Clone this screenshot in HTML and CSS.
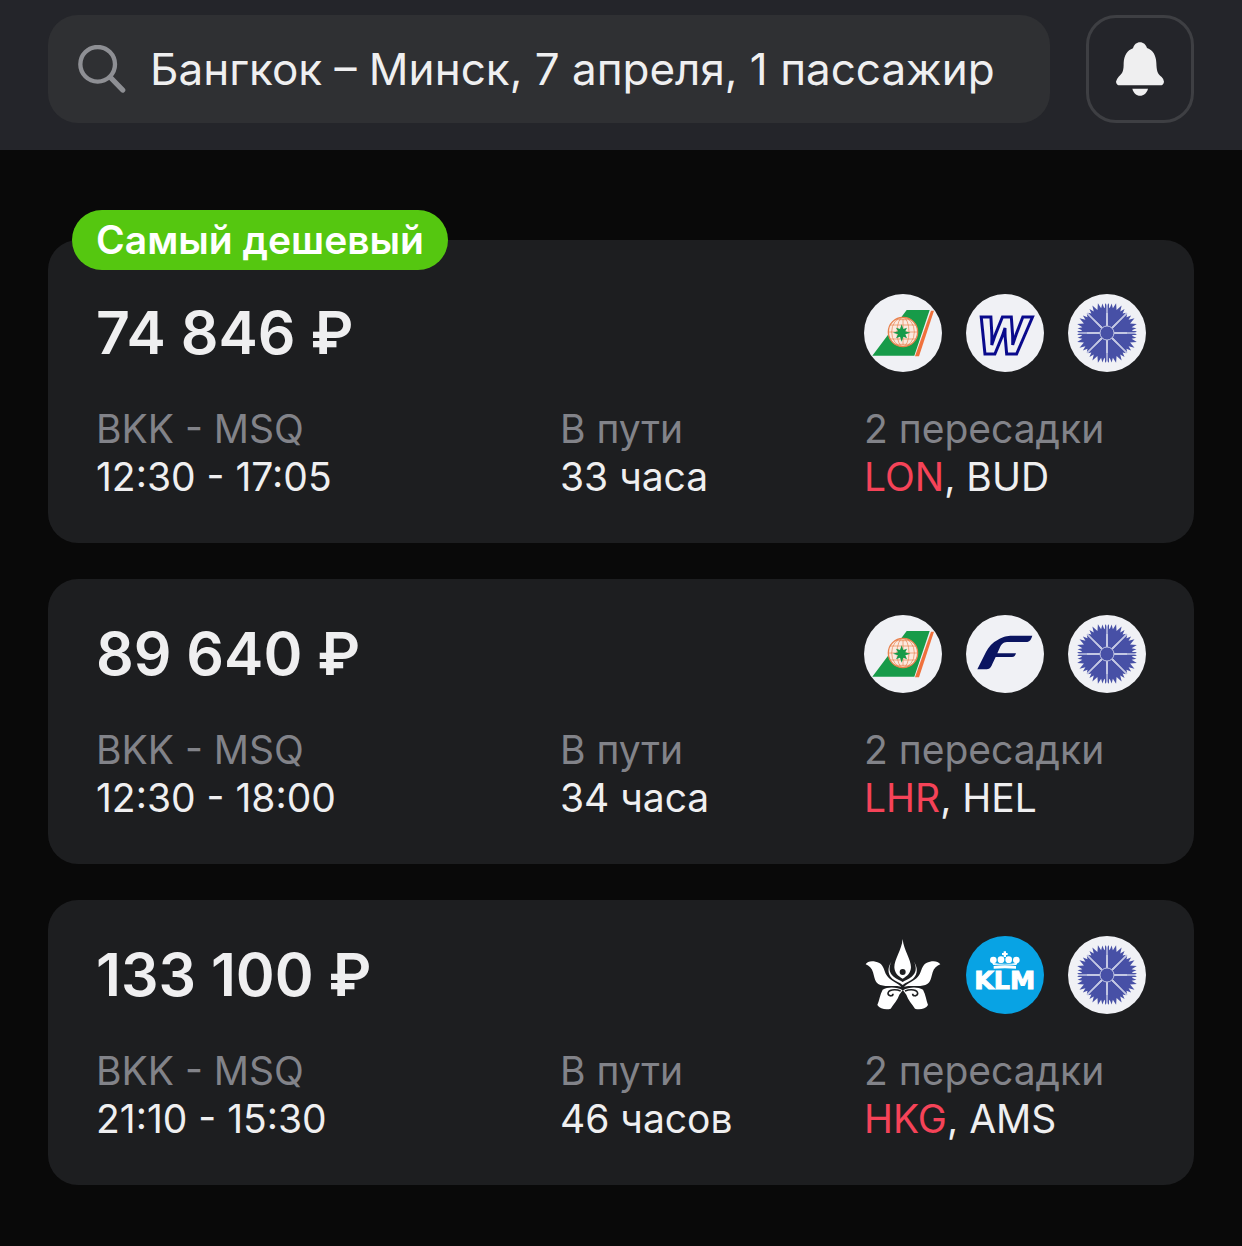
FILE: index.html
```html
<!DOCTYPE html>
<html lang="ru">
<head>
  <meta charset="UTF-8">
  <title>Бангкок – Минск</title>
  <meta name="viewport" content="width=device-width, initial-scale=1">
  <link rel="stylesheet" href="styles.css">
</head>
<body>
  <!-- airline logos used by more than one ticket -->
  <svg class="sprite" aria-hidden="true">
    <symbol id="logo-eva" viewBox="27 27 234 234">
      <circle cx="144" cy="144" r="117" fill="#f0f1f5"/>
      <path d="M52 212 155 75H224L178 212Z" fill="#179b49"/>
      <path d="M228 77H237L192 214H180Z" fill="#f0713c"/>
      <circle cx="144" cy="141" r="44" fill="#fbe9df" stroke="#e8824f" stroke-width="4"/>
      <g fill="none" stroke="#e8824f" stroke-width="2">
        <ellipse cx="144" cy="141" rx="18" ry="44"/>
        <ellipse cx="144" cy="141" rx="34" ry="44"/>
        <path d="M144 97V185M100 141H188M106 120H182M106 162H182M120 104H168M120 178H168"/>
      </g>
      <path d="M140 118 145 132 156 128 151 139 166 143 151 148 156 160 145 155 140 170 135 155 123 160 129 148 114 143 129 139 123 128 135 132Z" fill="#179b49"/>
    </symbol>
    <symbol id="logo-belavia" viewBox="-39 -39 78 78">
      <defs>
        <path id="petal" d="M-2 -7 -8 -21 -10 -26 -7 -24 -7 -29 -4 -25 -3 -31 0 -25 3 -31 4 -25 7 -29 7 -24 10 -26 8 -21 2 -7Z"/>
      </defs>
      <circle r="39" fill="#f0f1f5"/>
      <g fill="#4750a6">
        <use href="#petal" transform="rotate(22.5)"/>
        <use href="#petal" transform="rotate(67.5)"/>
        <use href="#petal" transform="rotate(112.5)"/>
        <use href="#petal" transform="rotate(157.5)"/>
        <use href="#petal" transform="rotate(202.5)"/>
        <use href="#petal" transform="rotate(247.5)"/>
        <use href="#petal" transform="rotate(292.5)"/>
        <use href="#petal" transform="rotate(337.5)"/>
        <path d="M-2-20-2-30 0-27 2-30 2-20ZM-2 20-2 30 0 27 2 30 2 20ZM-20-2-30-2-27 0-30 2-20 2ZM20-2 30-2 27 0 30 2 20 2Z"/>
      </g>
      <path d="M0-29V29M-29 0H29M-20-20 20 20M-20 20 20-20" stroke="#c3c7e4" stroke-width="1.4"/>
      <circle r="7" fill="#4750a6" stroke="#b4b9de" stroke-width="1"/>
    </symbol>
  </svg>

  <header class="topbar">
    <label class="search">
      <svg class="search-icon" viewBox="234 134 144 144" aria-hidden="true">
        <circle cx="293" cy="192" r="52"/>
        <path d="M333 233 368 269"/>
      </svg>
      <input type="text" aria-label="Поиск" value="Бангкок – Минск, 7 апреля, 1 пассажир">
    </label>
    <button class="bell" type="button" aria-label="Уведомления">
      <svg viewBox="228 128 144 160" aria-hidden="true">
        <path d="M300 128C310 128 318 135 321 145C340 152 348 168 349 190C350 214 352 222 365 232Q372 239 372 246Q371 257 360 257H240Q229 257 228 246Q229 239 236 231C249 220 251 212 251 190C252 168 262 152 279 146C282 135 290 128 300 128Z"/>
        <path d="M277 267H324C320 281 311 288 300 288S281 281 277 267Z"/>
      </svg>
    </button>
  </header>

  <main class="tickets">
    <article class="ticket ticket-best">
      <span class="badge">Самый дешевый</span>
      <div class="ticket-top">
        <h2 class="price">74 846 ₽</h2>
        <div class="airlines">
          <svg><use href="#logo-eva"/></svg>
          <svg viewBox="27 27 234 234">
            <circle cx="144" cy="144" r="117" fill="#f0f1f5"/>
            <text class="logo-w" x="138" y="206" text-anchor="middle">W</text>
          </svg>
          <svg><use href="#logo-belavia"/></svg>
        </div>
      </div>
      <dl class="details">
        <div>
          <dt>BKK - MSQ</dt>
          <dd>12:30 - 17:05</dd>
        </div>
        <div>
          <dt>В пути</dt>
          <dd>33 часа</dd>
        </div>
        <div>
          <dt>2 пересадки</dt>
          <dd><span class="warn">LON</span>, BUD</dd>
        </div>
      </dl>
    </article>

    <article class="ticket">
      <div class="ticket-top">
        <h2 class="price">89 640 ₽</h2>
        <div class="airlines">
          <svg><use href="#logo-eva"/></svg>
          <svg viewBox="27 27 234 234">
            <circle cx="144" cy="144" r="117" fill="#f0f1f5"/>
            <path d="M61 190 87 138C94 123 107 109 123 101C141 91 149 89 166 89H226C223 99 219 106 211 108H150C138 109 133 115 129 124L121 142H177C175 149 172 153 165 153H116L106 174C101 186 97 190 86 190Z" fill="#0b1560"/>
          </svg>
          <svg><use href="#logo-belavia"/></svg>
        </div>
      </div>
      <dl class="details">
        <div>
          <dt>BKK - MSQ</dt>
          <dd>12:30 - 18:00</dd>
        </div>
        <div>
          <dt>В пути</dt>
          <dd>34 часа</dd>
        </div>
        <div>
          <dt>2 пересадки</dt>
          <dd><span class="warn">LHR</span>, HEL</dd>
        </div>
      </dl>
    </article>

    <article class="ticket">
      <div class="ticket-top">
        <h2 class="price">133 100 ₽</h2>
        <div class="airlines">
          <svg viewBox="27 27 234 234">
            <g fill="#fff">
              <path d="M143 36C146 70 168 96 168 121C167 138 157 148 143 155C129 148 119 138 118 121C118 96 140 70 143 36Z"/>
              <path d="M110 103C98 120 96 141 112 155C122 164 134 165 143 174C152 165 164 164 174 155C190 141 188 120 176 103C187 122 183 140 170 149C160 157 151 159 143 165C135 159 126 157 116 149C103 140 99 122 110 103Z"/>
              <path d="M32 112C38 100 57 100 73 108C87 116 87 132 95 145C103 158 119 164 139 179C119 175 95 180 76 174C58 167 59 151 54 136C51 124 42 116 32 112Z"/>
              <path d="M256 112C248 100 230 100 214 108C200 116 200 132 192 145C184 158 167 164 147 179C168 175 192 180 211 174C229 167 228 151 233 136C236 124 246 116 256 112Z"/>
              <path d="M143 190C126 180 99 179 83 188C75 202 73 220 67 234C75 246 94 250 107 245C116 231 128 218 133 203Z"/>
              <path d="M144 190C161 180 188 179 204 188C212 202 214 220 219 234C212 246 193 250 180 245C171 231 159 218 154 203Z"/>
            </g>
            <circle cx="143" cy="135" r="9" fill="#1e1f21"/>
            <path d="M137 192C120 185 99 188 99 200C101 209 114 208 114 200M150 192C168 185 188 188 188 200C186 209 173 208 173 200" fill="none" stroke="#1e1f21" stroke-width="5"/>
          </svg>
          <svg viewBox="27 27 234 234">
            <circle cx="144" cy="144" r="117" fill="#08a3e4"/>
            <g fill="#fff">
              <circle cx="109" cy="99" r="10"/>
              <circle cx="132" cy="98" r="10"/>
              <circle cx="155" cy="98" r="10"/>
              <circle cx="178" cy="99" r="10"/>
              <path d="M140 73H147V78H152V84H147V90H140V84H135V78H140Z"/>
              <path d="M105 107Q144 114 182 107L178 114Q144 111 109 114ZM110 117Q144 113 177 117V125Q144 122 110 125Z"/>
            </g>
            <text class="logo-k" x="143" y="186" text-anchor="middle">KLM</text>
          </svg>
          <svg><use href="#logo-belavia"/></svg>
        </div>
      </div>
      <dl class="details">
        <div>
          <dt>BKK - MSQ</dt>
          <dd>21:10 - 15:30</dd>
        </div>
        <div>
          <dt>В пути</dt>
          <dd>46 часов</dd>
        </div>
        <div>
          <dt>2 пересадки</dt>
          <dd><span class="warn">HKG</span>, AMS</dd>
        </div>
      </dl>
    </article>
  </main>
</body>
</html>
```

FILE: styles.css
```css
:root {
  --bg: #090909;
  --bar: #24252a;
  --field: #2f3033;
  --card: #1d1e20;
  --text: #efeff0;
  --muted: #828389;
  --border: #3e3f43;
  --green: #55c710;
  --red: #f54358;
}
* { box-sizing: border-box; }
body {
  margin: 0;
  background: var(--bg);
  color: var(--text);
  font-family: Inter, "Liberation Sans", sans-serif;
  font-size: 39px;
}
.sprite {
  position: absolute;
  width: 0;
  height: 0;
}
.topbar {
  display: flex;
  gap: 36px;
  padding: 15px 48px 27px;
  background: var(--bar);
}
.search {
  flex: 1;
  min-width: 0;
  height: 108px;
  display: flex;
  align-items: center;
  gap: 24px;
  padding: 0 30px;
  border-radius: 30px;
  background: var(--field);
}
.search-icon {
  flex: none;
  width: 48px;
  height: 48px;
  fill: none;
  stroke: #8e8f94;
  stroke-width: 13;
  stroke-linecap: round;
}
.search-icon path { stroke-width: 16; }
.search input {
  flex: 1;
  min-width: 0;
  padding: 0;
  border: none;
  outline: none;
  background: none;
  color: inherit;
  font: inherit;
  font-size: 44px;
}
.bell {
  flex: none;
  width: 108px;
  height: 108px;
  display: flex;
  align-items: center;
  justify-content: center;
  padding: 0;
  border: 3px solid var(--border);
  border-radius: 30px;
  background: none;
  cursor: pointer;
}
.bell svg {
  width: 48px;
  height: 54px;
  fill: var(--text);
}
.tickets {
  display: flex;
  flex-direction: column;
  gap: 36px;
  padding: 90px 48px 60px;
}
.ticket {
  position: relative;
  padding: 36px 48px 42px;
  border-radius: 30px;
  background: var(--card);
}
.ticket-best { padding-top: 54px; }
.badge {
  position: absolute;
  top: -30px;
  left: 24px;
  padding: 0 24px;
  border-radius: 30px;
  background: var(--green);
  color: #fff;
  font-weight: 600;
  line-height: 60px;
}
.ticket-top {
  display: flex;
  align-items: center;
  justify-content: space-between;
  margin-bottom: 33px;
}
.price {
  margin: 0;
  font-size: 59px;
  font-weight: 600;
  line-height: 78px;
}
.airlines {
  display: flex;
  gap: 24px;
}
.airlines svg {
  width: 78px;
  height: 78px;
}
.details {
  display: grid;
  grid-template-columns: 29fr 19fr 282px;
  margin: 0;
  line-height: 48px;
  white-space: nowrap;
}
.details dt { color: var(--muted); }
.details dd { margin: 0; }
.warn { color: var(--red); }
.logo-w {
  font-family: Inter, sans-serif;
  font-size: 152px;
  font-style: italic;
  font-weight: 800;
  fill: #f0f1f5;
  stroke: #0a0a8c;
  stroke-width: 9;
}
.logo-k {
  font-family: "DejaVu Sans", sans-serif;
  font-size: 76px;
  font-weight: 700;
  fill: #fff;
  stroke: #fff;
  stroke-width: 3;
}
```
